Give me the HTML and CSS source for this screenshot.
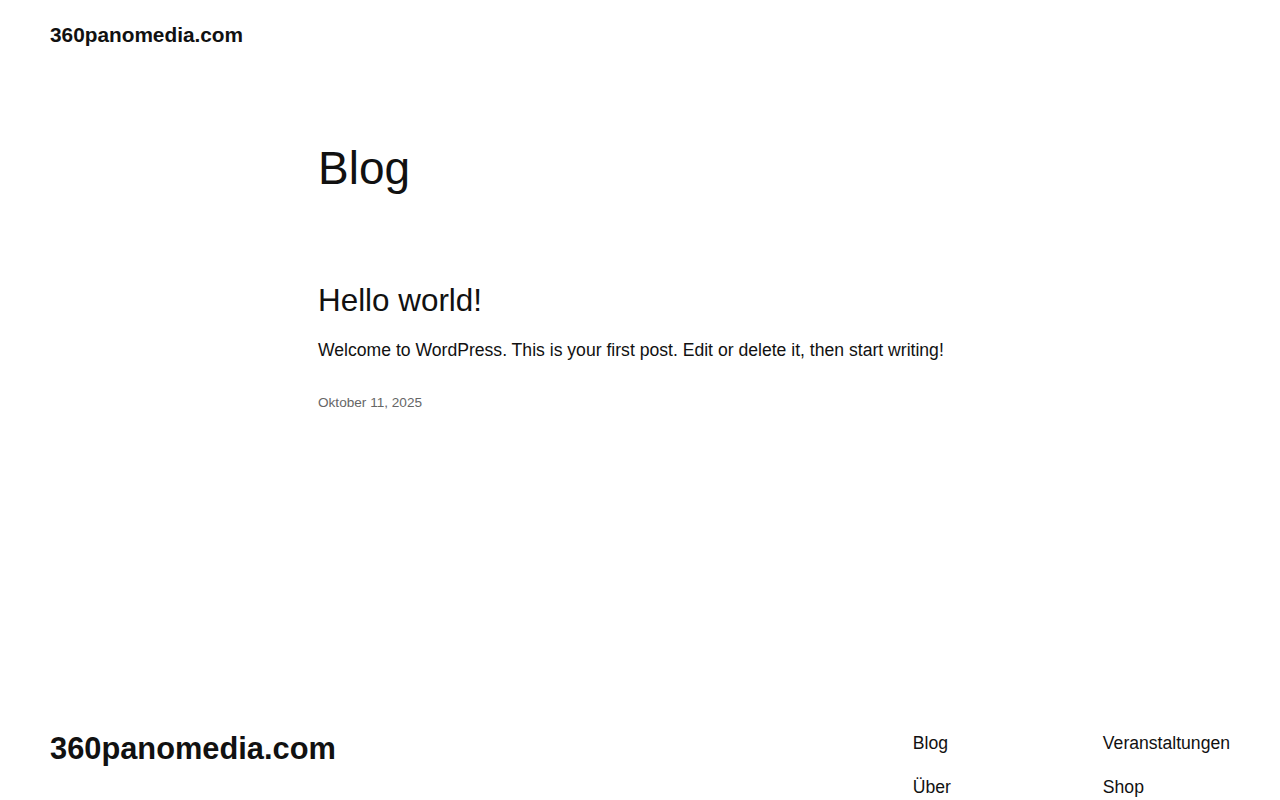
FILE: index.html
```html
<!DOCTYPE html>
<html lang="de">
<head>
    <meta charset="UTF-8">
    <meta name="viewport" content="width=device-width, initial-scale=1.0">
    <title>Blog – 360panomedia.com</title>
    <link rel="stylesheet" href="styles.css">
</head>
<body>
    <header class="site-header">
        <a class="site-title" href="#">360panomedia.com</a>
    </header>

    <main class="site-main">
        <h1 class="page-title">Blog</h1>

        <article class="post">
            <h2 class="post-title"><a href="#">Hello world!</a></h2>
            <p class="post-excerpt">Welcome to WordPress. This is your first post. Edit or delete it, then start writing!</p>
            <div class="post-date">Oktober 11, 2025</div>
        </article>
    </main>

    <footer class="site-footer">
        <a class="footer-title" href="#">360panomedia.com</a>
        <nav class="footer-nav">
            <div class="footer-col">
                <a href="#">Blog</a>
                <a href="#">Über</a>
            </div>
            <div class="footer-col">
                <a href="#">Veranstaltungen</a>
                <a href="#">Shop</a>
            </div>
        </nav>
    </footer>
</body>
</html>
```

FILE: styles.css
```css
body {
    margin: 0;
    font-family: "Liberation Sans", Arial, sans-serif;
    color: #111111;
    background: #ffffff;
}
a {
    color: inherit;
    text-decoration: none;
}
.site-header {
    padding: 21px 50px 0;
}
.site-title {
    font-size: 20.8px;
    font-weight: bold;
    line-height: 1.3;
}
.site-main {
    padding: 93px 50px 0 318px;
    min-height: 650px;
    box-sizing: border-box;
}
.page-title {
    font-size: 46px;
    font-weight: normal;
    line-height: 1.2;
    margin: 0;
}
.post {
    margin-top: 86px;
}
.post-title {
    font-size: 31.4px;
    font-weight: normal;
    line-height: 1.2;
    margin: 0;
}
.post-excerpt {
    font-size: 17.6px;
    line-height: 1.5;
    margin: 17px 0 0;
}
.post-date {
    font-size: 13.6px;
    color: #666666;
    margin-top: 32px;
}
.site-footer {
    display: flex;
    justify-content: space-between;
    align-items: flex-start;
    padding: 32px 50px 40px;
}
.footer-title {
    font-size: 30.8px;
    font-weight: bold;
    line-height: 1.2;
    margin-top: 1px;
}
.footer-nav {
    display: flex;
}
.footer-col {
    display: flex;
    flex-direction: column;
    gap: 17.6px;
    width: 190px;
    font-size: 17.6px;
    line-height: 1.5;
}
.footer-col:last-child {
    width: auto;
}
```
